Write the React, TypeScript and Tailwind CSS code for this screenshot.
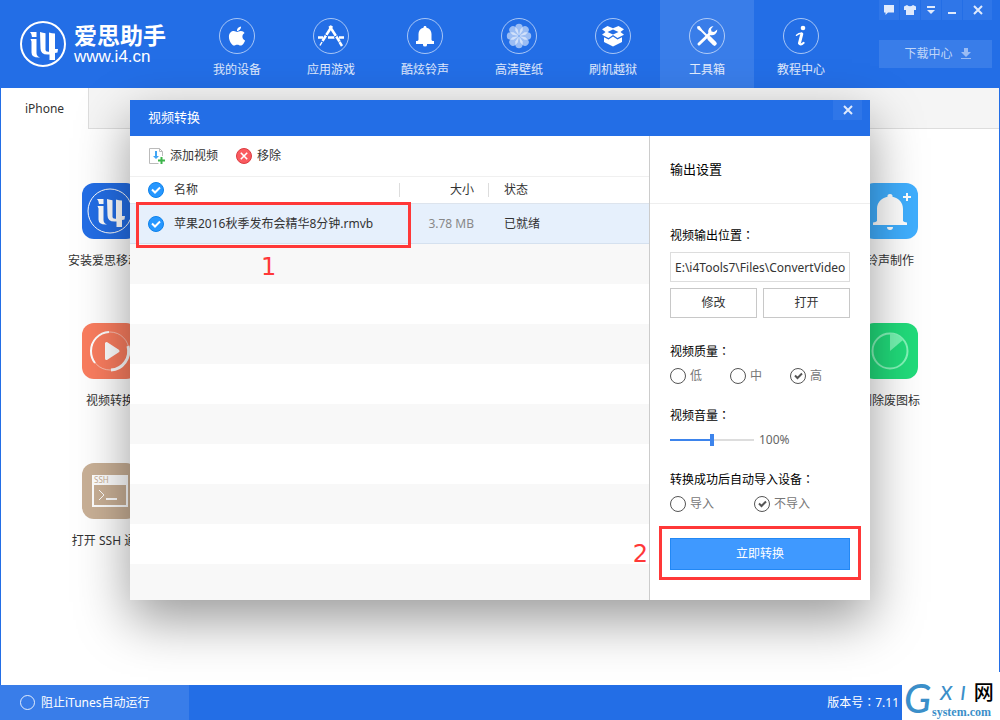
import { useState } from 'react';
import { FaApple } from 'react-icons/fa';

interface NavItem { label: string; icon: React.ReactNode; }
interface Tool { label: string; icon: React.ReactNode; }

const petals = [0, 45, 90, 135, 180, 225, 270, 315];

const AppsIcon = () => (
  <svg width="28" height="22" viewBox="0 0 28 22" fill="none" stroke="white">
    <path d="M15 1 5.500 16" strokeWidth="2.500" />
    <path d="M12.500 1 22.500 16.500" strokeWidth="2.500" />
    <path d="M5 17 3 20.500" strokeWidth="1.500" />
    <path d="M22.500 17 25 21" strokeWidth="2.500" />
    <path d="M1 12.500h5M11 12.500h6.500M22 12.500h5" strokeWidth="2.500" />
    <path d="M8 9.500l3 2M20 10.500l-3 2" stroke="#236ee6" strokeWidth="1" />
  </svg>
);

const BellIcon = () => (
  <svg width="20" height="22" viewBox="0 0 20 22" fill="white">
    <path d="M10 1c1 0 1.500.6 1.500 1.700C14.800 3.400 16.500 6 16.500 9v5.500c0 1 1 1.500 2.500 1.500v3H1v-3c1.500 0 2.500-.5 2.500-1.500V9c0-3 1.700-5.600 5-6.300C8.500 1.600 9 1 10 1z" />
    <path d="M8 19h4v1a2 1.500 0 0 1-4 0z" />
  </svg>
);

const FlowerIcon = () => (
  <svg width="26" height="26" viewBox="0 0 26 26" fill="white">
    {petals.map((deg) => <path key={deg} d="M13 13 9.300 7.500V4.500a3.700 3.700 0 0 1 7.400 0v3z" fillOpacity=".55" transform={`rotate(${deg} 13 13)`} />)}
    <circle cx="13" cy="13" r="1.200" fill="#8ab4f4" />
  </svg>
);

const BoxIcon = () => (
  <svg width="24" height="22" viewBox="0 0 24 22" fill="white">
    <path d="M6.500 1 12 3.200 17.500 1 23 4.200 19.500 7 23 9.700 16.500 13 12 10 7.500 13 1 9.700 4.500 7 1 4.200zM12 4.500 6.500 7 12 9.500 17.500 7z" fillRule="evenodd" />
    <path d="M3 12.200 7.500 14.500 12 11.500l4.500 3 4.500-2.300V17l-9 4.500L3 17z" />
  </svg>
);

const ToolsIcon = () => (
  <svg width="22" height="22" viewBox="0 0 22 22" fill="none" stroke="white">
    <path d="M2 2 12 12" strokeWidth="2" />
    <path d="M1 1.500 3.500 1l2.500 3.500L4.500 6 1.500 4z" fill="white" stroke="none" />
    <path d="M13.500 13.500l5 5" strokeWidth="4.500" strokeLinecap="round" />
    <path d="M3 19 14 8.500" strokeWidth="3" strokeLinecap="round" />
    <path d="M17.500 1a5.500 5.500 0 0 0-5 7.500l1.500 1.500a5.500 5.500 0 0 0 7.300-5.500L18 7l-2.500-.5L15 4z" fill="white" stroke="none" />
  </svg>
);

const InfoIcon = () => (
  <svg width="14" height="22" viewBox="0 0 14 22" fill="none" stroke="white" strokeLinecap="round">
    <circle cx="9" cy="3" r="2.300" fill="white" stroke="none" />
    <path d="M7.800 9 5.500 18" strokeWidth="3" />
    <path d="M5.200 18.500q1 2.500 4.500-.7" strokeWidth="2" />
    <path d="M2.500 10.200Q5 8 7.500 8.200" strokeWidth="1.500" />
  </svg>
);

function Logo({ size, thin }: { size: number; thin?: boolean }) {
  return (
    <svg width={size} height={size} viewBox="0 0 46 46" fill="white">
      <circle cx="23" cy="23" r="22" fill="none" stroke="white" strokeWidth={thin ? 1 : 2} />
      <path d="M10 11h6.500v5H12q0-3-2-5zM10.500 18H16.500v14q0 3 3.500 4.500-8.500.5-8.500-5V20.500z" />
      <path d="M20 11q3 1 5.500 1.200V29q0 2 3.500 1.700V11.500q3 1 6 1V28h3l-.5 3.500-2.500.5v7h-5.500v-5.500h-2q-7 0-7-6z" />
    </svg>
  );
}

const navItems: NavItem[] = [
  { label: '我的设备', icon: <FaApple size={22} /> },
  { label: '应用游戏', icon: <AppsIcon /> },
  { label: '酷炫铃声', icon: <BellIcon /> },
  { label: '高清壁纸', icon: <FlowerIcon /> },
  { label: '刷机越狱', icon: <BoxIcon /> },
  { label: '工具箱', icon: <ToolsIcon /> },
  { label: '教程中心', icon: <InfoIcon /> },
];

const leftTools: Tool[] = [
  { label: '安装爱思移动端', icon: <span className="flex size-14 items-center justify-center rounded-xl bg-[#236ee6]"><Logo size={46} thin /></span> },
  {
    label: '视频转换',
    icon: (
      <svg className="rounded-xl bg-[#fa7d5f]" width="56" height="56" viewBox="0 0 56 56" fill="none" stroke="white">
        <circle cx="28" cy="28" r="19" strokeOpacity=".5" />
        <path d="M27 9a19 19 0 0 0-18 19q0 7 4 12" strokeWidth="2" />
        <path d="M29 47a19 19 0 0 0 17-24" strokeWidth="3" />
        <path d="M24.500 20.500v15l11.500-7.500z" fill="white" strokeWidth="3" strokeLinejoin="round" />
      </svg>
    ),
  },
  {
    label: '打开 SSH 通道',
    icon: (
      <svg className="rounded-xl bg-[#c9b096]" width="56" height="56" viewBox="0 0 56 56" fill="none">
        <path d="M10 12h36v32H10zM12 22v20h32V22z" fill="white" fillRule="evenodd" />
        <text x="12" y="20" fontSize="8" fill="#c9b096" fontFamily="Noto Sans, sans-serif">SSH</text>
        <path d="M17 27l5 5-5 5" stroke="white" />
        <path d="M24 36h11" stroke="white" strokeWidth="2" />
      </svg>
    ),
  },
];

const rightTools: Tool[] = [
  {
    label: '铃声制作',
    icon: (
      <svg className="rounded-xl bg-[#40afff]" width="56" height="56" viewBox="0 0 56 56" fill="white">
        <path d="M28 11a2.500 2.500 0 0 1 2.500 2.800C37.500 15.500 41 20 41 26v12q1 1 4 1.500V42H11v-2.500q3-.5 4-1.500V26c0-6 3.500-10.500 10.500-12.200A2.500 2.500 0 0 1 28 11zM25 44h6a3 3 0 0 1-6 0z" />
        <path d="M41 13h3v-3h2v3h3v2h-3v3h-2v-3h-3z" />
      </svg>
    ),
  },
  {
    label: '删除废图标',
    icon: (
      <svg className="rounded-xl bg-[#21dc7b]" width="56" height="56" viewBox="0 0 56 56" fill="none">
        <circle cx="28" cy="28" r="17.500" stroke="#84f5b9" strokeWidth="2" />
        <path d="M28 28V10.500a17.500 17.500 0 0 1 13 6.500z" fill="#75f5b1" />
      </svg>
    ),
  },
];

const emptyRows = [1, 2, 3, 4, 5, 6, 7, 8, 9];

function ToolColumn({ tools }: { tools: Tool[] }) {
  return (
    <div className="flex w-39 flex-col">
      {tools.map((tool) => (
        <a key={tool.label} href="#tool" className="flex h-35 flex-col items-center gap-3.5">
          {tool.icon}
          <span className="whitespace-nowrap leading-4">{tool.label}</span>
        </a>
      ))}
    </div>
  );
}

function Cross({ size = 10 }: { size?: number }) {
  return <svg width={size} height={size} viewBox="0 0 10 10" stroke="currentColor" strokeWidth="2"><path d="M1 1l8 8M9 1 1 9" /></svg>;
}

// full-width colon, centred in its cell
const Colon = () => <span className="font-['Noto_Sans_CJK_TC',sans-serif] leading-none">：</span>;

function RowCheck({ label }: { label: string }) {
  return (
    <span className="grid size-4 shrink-0 place-items-center">
      <input type="checkbox" defaultChecked aria-label={label} className="peer col-start-1 row-start-1 size-4 appearance-none rounded-full border border-[#a9b5c5] checked:border-[#0f82ea] checked:bg-[#2697ff]" />
      <svg className="pointer-events-none invisible col-start-1 row-start-1 peer-checked:visible" width="10" height="8" viewBox="0 0 10 8" fill="none" stroke="white" strokeWidth="2"><path d="M1 3.500 4 6.500 9 1.500" /></svg>
    </span>
  );
}

function Radio({ name, label, checked, onSelect }: { name: string; label: string; checked: boolean; onSelect: () => void }) {
  return (
    <label className="flex h-4 items-center gap-1 text-[#777]">
      <span className="grid place-items-center">
        <input type="radio" name={name} checked={checked} onChange={onSelect} className="peer col-start-1 row-start-1 size-4 appearance-none rounded-full border border-[#555] bg-white" />
        <svg className="pointer-events-none invisible col-start-1 row-start-1 peer-checked:visible" width="9" height="8" viewBox="0 0 9 8" fill="none" stroke="#555" strokeWidth="2"><path d="M1 3.500 3.500 6 8 1.500" /></svg>
      </span>
      {label}
    </label>
  );
}

function Header() {
  return (
    <header className="flex h-22 bg-[#236ee6] text-white">
      <div className="flex w-[190px] shrink-0 items-start gap-2 pl-5 pt-[21px]">
        <Logo size={46} />
        <div className="whitespace-nowrap">
          <div className="text-[23px] font-bold leading-7">爱思助手</div>
          <div className="font-['Liberation_Sans',sans-serif] text-[17px] leading-4">www.i4.cn</div>
        </div>
      </div>
      <nav className="flex">
        {navItems.map((item) => (
          <a key={item.label} href="#nav" className={`flex w-[94px] flex-col items-center gap-2 pt-[18px] ${item.label === '工具箱' ? 'bg-[#397de9]' : ''}`}>
            <span className="flex size-9 items-center justify-center rounded-full border border-white/60">{item.icon}</span>
            <span className="leading-4 text-white/85">{item.label}</span>
          </a>
        ))}
      </nav>
      <div className="mr-2 ml-auto flex w-[113px] shrink-0 flex-col gap-5">
        <div className="flex gap-px text-white/85">
          <button aria-label="反馈" className="flex h-5 flex-1 items-center justify-center bg-[#2f76e8]"><svg width="10" height="10" viewBox="0 0 10 10" fill="currentColor"><path d="M0 0h10v7.500H4L1.500 10V7.500H0z" /></svg></button>
          <button aria-label="皮肤" className="flex h-5 flex-1 items-center justify-center bg-[#2f76e8]"><svg width="12" height="10" viewBox="0 0 12 10" fill="currentColor"><path d="M3 0q3 2.500 6 0l3 1.500V5h-2v5H2V5H0V1.500z" /></svg></button>
          <button aria-label="菜单" className="flex h-5 flex-1 items-center justify-center bg-[#2f76e8]"><svg width="8" height="8" viewBox="0 0 8 8" fill="currentColor"><path d="M0 0h8v2H0zM0 4h8L4 8z" /></svg></button>
          <button aria-label="最小化" className="flex h-5 flex-1 items-center justify-center bg-[#2f76e8]"><svg width="8" height="8" viewBox="0 0 8 8" fill="currentColor"><path d="M0 6h8v2H0z" /></svg></button>
          <button aria-label="关闭" className="flex h-5 w-[29px] items-center justify-center bg-[#2f76e8]"><Cross /></button>
        </div>
        <button className="flex h-7 items-center justify-center gap-2 bg-[#397de9] pl-1 text-white/70">
          下载中心
          <svg width="10" height="12" viewBox="0 0 10 12" fill="currentColor" fillOpacity=".7"><path d="M3 0h4v4h3L5 9 0 4h3zM0 10h10v1H0z" /></svg>
        </button>
      </div>
    </header>
  );
}

function FileTable() {
  return (
    <table className="w-full table-fixed border-separate border-spacing-0 text-left">
      <thead>
        <tr className="h-[27px] [&>th]:border-b [&>th]:border-[#dde4ed]">
          <th className="w-[270px] p-0 font-normal">
            <div className="flex h-3.5 items-center gap-2.5 border-r border-[#ddd] pl-[18px]"><RowCheck label="全选" />名称</div>
          </th>
          <th className="w-[89px] p-0 font-normal">
            <div className="flex h-3.5 items-center justify-end border-r border-[#ddd] pr-3.5">大小</div>
          </th>
          <th className="p-0 pl-[15px] font-normal">状态</th>
        </tr>
      </thead>
      <tbody>
        <tr className="h-10 bg-[#e6f0fc] [&>td]:border-b [&>td]:border-[#d5e1ef]">
          <td className="p-0"><div className="flex items-center gap-2.5 whitespace-nowrap pl-[18px]"><RowCheck label="选择文件" />苹果2016秋季发布会精华8分钟.rmvb</div></td>
          <td className="whitespace-nowrap p-0 pr-[15px] text-right text-[#888]">3.78 MB</td>
          <td className="p-0 pl-[15px]">已就绪</td>
        </tr>
        {emptyRows.map((row) => <tr key={row} className="h-10 odd:bg-white even:bg-[#f8f8f8]"><td colSpan={3} className="p-0" /></tr>)}
      </tbody>
    </table>
  );
}

function OutputSettings() {
  const [quality, setQuality] = useState('高');
  const [autoImport, setAutoImport] = useState('不导入');
  const [volume, setVolume] = useState(50);

  return (
    <aside className="w-[220px] shrink-0 text-black">
      <h3 className="flex h-17 items-center border-b border-[#eee] px-5 text-[13px]">输出设置</h3>
      <div className="flex flex-col px-5 pt-6 pb-[30px] leading-4">
        <label htmlFor="path" className="h-4">视频输出位置<Colon /></label>
        <input id="path" defaultValue="E:\i4Tools7\Files\ConvertVideo" className="mt-2 h-[30px] w-full border border-[#ddd] pl-1 text-[#333]" />
        <div className="mt-1.5 flex gap-1.5 text-[#333]">
          <button className="h-[30px] flex-1 border border-[#c8c8c8]">修改</button>
          <button className="h-[30px] flex-1 border border-[#c8c8c8]">打开</button>
        </div>
        <fieldset className="mt-[26px]">
          <legend className="h-4">视频质量<Colon /></legend>
          <div className="mt-2 grid grid-cols-3">
            {['低', '中', '高'].map((q) => <Radio key={q} name="quality" label={q} checked={quality === q} onSelect={() => setQuality(q)} />)}
          </div>
        </fieldset>
        <label htmlFor="volume" className="mt-6 h-4">视频音量<Colon /></label>
        <div className="mt-2 flex h-4 items-center gap-[5px] text-[#666]">
          <input id="volume" type="range" value={volume} onChange={(e) => setVolume(Number(e.target.value))} style={{ backgroundImage: `linear-gradient(to right, #3d84ec ${volume}%, #ddd ${volume}%)` }} className="h-0.5 w-21 appearance-none [&::-webkit-slider-thumb]:h-3 [&::-webkit-slider-thumb]:w-1 [&::-webkit-slider-thumb]:appearance-none [&::-webkit-slider-thumb]:bg-[#3d84ec]" />
          {volume * 2}%
        </div>
        <fieldset className="mt-6">
          <legend className="h-4">转换成功后自动导入设备<Colon /></legend>
          <div className="mt-2 flex gap-10">
            {['导入', '不导入'].map((v) => <Radio key={v} name="import" label={v} checked={autoImport === v} onSelect={() => setAutoImport(v)} />)}
          </div>
        </fieldset>
        <div className="relative mt-[26px]">
          <button className="h-8 w-full border border-[#2288f5] bg-[#3f99ff] text-white">立即转换</button>
          <div className="pointer-events-none absolute -inset-x-[11px] -top-3 -bottom-2.5 border-3 border-[#ff3838]" />
          <span className="absolute right-[202px] top-0 font-['DejaVu_Sans',sans-serif] text-2xl leading-8 text-[#ff3838]">2</span>
        </div>
      </div>
    </aside>
  );
}

function ConvertDialog() {
  return (
    <div className="absolute inset-0 flex items-start justify-center pt-[100px]">
      <section role="dialog" aria-label="视频转换" className="relative w-full max-w-[740px] bg-white shadow-[0_20px_50px_rgba(0,0,0,0.4)]">
        <div className="flex h-9 justify-between bg-[#236ee6] pl-[18px] pr-2 text-white">
          <h2 className="self-center text-[13px]">视频转换</h2>
          <button aria-label="关闭" className="flex h-5 w-[29px] items-center justify-center bg-[#2f76e8] text-white/85"><Cross /></button>
        </div>
        <div className="flex">
          <div className="relative min-w-0 flex-1 border-r border-[#ccc]">
            <div className="absolute inset-0 flex flex-col overflow-hidden">
              <div className="flex h-[41px] shrink-0 items-center gap-[18px] border-b border-[#f0f0f0] pl-[18px]">
                <button className="flex items-center gap-1">
                  <svg width="18" height="18" viewBox="0 0 18 18" fill="none">
                    <path d="M14.500 9V4.500l-3-3H1.500v15h9M11.500 1.500v3h3" stroke="#bbb" />
                    <path d="M7 4h2v5h2l-3 3-3-3h2z" fill="#40a5f5" />
                    <path d="M13.500 10v7M10 13.500h7" stroke="#3cb44a" strokeWidth="2" />
                  </svg>
                  添加视频
                </button>
                <button className="flex items-center gap-[5px]">
                  <span className="flex size-4 items-center justify-center rounded-full border border-[#dc3c41] bg-[#fa5a5f] text-white"><Cross size={8} /></span>
                  移除
                </button>
              </div>
              <FileTable />
            </div>
          </div>
          <OutputSettings />
        </div>
        <div className="pointer-events-none absolute left-1.5 top-[102px] h-[46px] w-[275px] border-3 border-[#ff3838]" />
        <span className="absolute left-[131px] top-[151px] font-['DejaVu_Sans',sans-serif] text-2xl leading-8 text-[#ff3838]">1</span>
      </section>
    </div>
  );
}

export default function App() {
  return (
    <div className="relative flex min-h-screen flex-col overflow-hidden bg-white font-['Noto_Sans','Noto_Sans_CJK_SC',sans-serif] text-xs text-[#333]">
      <Header />
      <main className="flex-1 border-x border-[#236ee6]">
        <div className="flex h-[41px] border-b border-[#ddd] bg-[#f5f5f5]">
          <button className="h-[41px] w-22 border-r border-[#ddd] bg-white">iPhone</button>
        </div>
        <div className="flex justify-between px-[31px] pt-[54px]">
          <ToolColumn tools={leftTools} />
          <ToolColumn tools={rightTools} />
        </div>
      </main>
      <footer className="flex h-[35px] items-center bg-[#236ee6] text-white">
        <label className="flex h-full w-[189px] items-center gap-1.5 bg-[#397de9] pl-5">
          <input type="checkbox" className="size-[15px] appearance-none rounded-full border border-white/85 checked:bg-white" />
          阻止iTunes自动运行
        </label>
        <span className="ml-auto pr-[101px]">版本号<Colon />7.11</span>
      </footer>
      <div className="absolute bottom-0 right-0 flex h-12 w-[98px] bg-white pl-0.5 font-['Lato','Noto_Sans_CJK_SC',sans-serif] text-[#3b8fc9]">
        <span className="w-7 text-[40px] font-medium italic leading-[52px]">G</span>
        <div className="flex flex-col pt-2">
          <div className="flex items-center gap-2 pl-2 text-xl font-medium italic leading-6"><span>X</span><span>I</span><span className="not-italic text-black">网</span></div>
          <span className="font-['Liberation_Serif',serif] text-[12px] font-bold leading-4">system.com</span>
        </div>
      </div>
      <ConvertDialog />
    </div>
  );
}
